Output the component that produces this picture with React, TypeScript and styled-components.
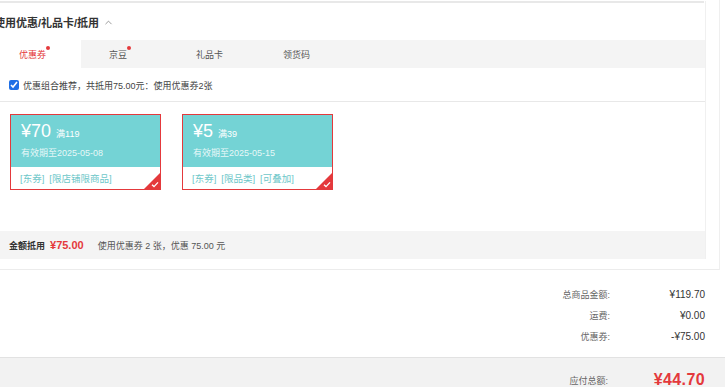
import styled, { createGlobalStyle } from "styled-components";
import { Fragment } from "react";
import { ChevronUp } from "lucide-react";

const GlobalStyle = createGlobalStyle`
  html, body {
    margin: 0;
    padding: 0;
    background: #fff;
    overflow: hidden;
  }
  body {
    font-family: "Liberation Sans", "Noto Sans CJK SC", sans-serif;
    color: #333;
  }
`;

const RED = "#e4393c";
const TEAL = "#74d3d5";

const Page = styled.div`
  width: 725px;
  height: 387px;
  background: #fff;
`;

const OuterBox = styled.section`
  width: 719px;
  padding-top: 1px;
  padding-bottom: 10px;
  border-right: 1px solid #efefef;
  border-bottom: 1px solid #ececec;
`;

const Panel = styled.div`
  width: 705px;
  border-right: 1px solid #f0f0f0;
`;

const Header = styled.div`
  width: 704px;
  height: 36px;
  border-top: 2px solid #e8e8e8;
  display: flex;
  align-items: center;
  gap: 4px;
  padding-top: 1px;
`;

const Title = styled.h3`
  margin: 0 0 0 -6px;
  font-size: 11px;
  font-weight: 700;
  color: #333;
  white-space: nowrap;
`;

const Caret = styled(ChevronUp)`
  color: #777;
`;

const TabBar = styled.div`
  display: flex;
  height: 28px;
  background: #f4f4f4;
`;

const Tab = styled.div<{ $active?: boolean; $first?: boolean }>`
  width: ${(p) => (p.$first ? "81px" : "87px")};
  padding-left: ${(p) => (p.$first ? "19px" : "28px")};
  box-sizing: border-box;
  display: flex;
  align-items: center;
  font-size: 9px;
  color: ${(p) => (p.$active ? RED : "#555")};
  background: ${(p) => (p.$active ? "#fff" : "transparent")};
`;

const TabLabel = styled.span`
  position: relative;
`;

const RedDot = styled.i`
  position: absolute;
  top: -2px;
  right: -4px;
  width: 4px;
  height: 4px;
  border-radius: 50%;
  background: ${RED};
`;

const CheckRow = styled.label`
  display: flex;
  align-items: center;
  gap: 4px;
  height: 34px;
  padding-left: 9px;
  padding-top: 1px;
  box-sizing: border-box;
  border-bottom: 1px solid #e8e8e8;
  font-size: 9px;
  color: #444;
`;

const CheckBox = styled.input`
  width: 10px;
  height: 10px;
  margin: 0;
  accent-color: #1f6fe5;
`;

const CardList = styled.div`
  display: flex;
  gap: 21px;
  padding: 12px 0 41px 10px;
`;

const Card = styled.div`
  position: relative;
  width: 151px;
  height: 76px;
  box-sizing: border-box;
  border: 1px solid ${RED};
  display: flex;
  flex-direction: column;
`;

const CardTop = styled.div`
  height: 52px;
  background: ${TEAL};
  color: #fff;
  padding: 6px 0 0 10px;
  box-sizing: border-box;
`;

const PriceLine = styled.div`
  display: flex;
  align-items: baseline;
  gap: 5px;
  height: 22px;
`;

const Price = styled.span`
  font-size: 18px;
`;

const Cond = styled.span`
  font-size: 9px;
`;

const Expire = styled.div`
  margin-top: 3px;
  font-size: 9px;
  color: rgba(255, 255, 255, 0.85);
`;

const CardBottom = styled.div`
  flex: 1;
  display: flex;
  align-items: center;
  gap: 5px;
  padding-left: 9px;
  font-size: 9.5px;
  color: #6ec7c9;
`;

const Corner = styled.div`
  position: absolute;
  right: 0;
  bottom: 0;
  width: 0;
  height: 0;
  border-style: solid;
  border-width: 0 0 16px 16px;
  border-color: transparent transparent ${RED} transparent;
`;

const CornerCheck = styled.svg`
  position: absolute;
  right: 1px;
  bottom: 1px;
`;

const Summary = styled.div`
  display: flex;
  align-items: center;
  height: 28px;
  background: #f4f4f4;
  padding-left: 9px;
  font-size: 9px;
  color: #555;
`;

const SumLabel = styled.span`
  font-weight: 700;
  color: #333;
`;

const SumValue = styled.span`
  color: ${RED};
  font-weight: 700;
  font-size: 11px;
  margin: 0 14px 0 5px;
`;

const Totals = styled.div`
  display: grid;
  grid-template-columns: auto 95px;
  justify-content: end;
  grid-auto-rows: 21px;
  padding: 14px 20px 10px 0;
  font-size: 9px;
`;

const TLabel = styled.span`
  text-align: right;
  color: #666;
  align-self: center;
`;

const TValue = styled.span`
  text-align: right;
  color: #333;
  font-size: 10px;
  align-self: center;
`;

const PayBar = styled.div`
  border-top: 1px solid #e2e2e2;
  background: #f2f2f2;
  height: 40px;
  display: grid;
  grid-template-columns: auto 95px;
  justify-content: end;
  align-items: center;
  padding: 2px 20px 0 0;
  font-size: 9px;
  color: #666;
`;

const PayLabel = styled.span`
  text-align: right;
  margin-right: 2px;
`;

const PayValue = styled.span`
  text-align: right;
  color: ${RED};
  font-weight: 700;
  font-size: 16px;
  letter-spacing: 0.4px;
`;

const coupons = [
  { amount: "¥70", cond: "满119", expire: "有效期至2025-05-08", tags: ["[东券]", "[限店铺限商品]"] },
  { amount: "¥5", cond: "满39", expire: "有效期至2025-05-15", tags: ["[东券]", "[限品类]", "[可叠加]"] },
];

const tabs = [
  { name: "优惠券", dot: true },
  { name: "京豆", dot: true },
  { name: "礼品卡", dot: false },
  { name: "领货码", dot: false },
];

const totals = [
  ["总商品金额:", "¥119.70"],
  ["运费:", "¥0.00"],
  ["优惠券:", "-¥75.00"],
];

export default function App() {
  return (
    <Page>
      <GlobalStyle />
      <OuterBox>
        <Panel>
          <Header>
            <Title>使用优惠/礼品卡/抵用</Title>
            <Caret size={11} strokeWidth={1.6} />
          </Header>
          <TabBar>
            {tabs.map((t, i) => (
              <Tab key={t.name} $active={i === 0} $first={i === 0}>
                <TabLabel>
                  {t.name}
                  {t.dot && <RedDot />}
                </TabLabel>
              </Tab>
            ))}
          </TabBar>
          <CheckRow>
            <CheckBox type="checkbox" defaultChecked />
            优惠组合推荐，共抵用75.00元：使用优惠券2张
          </CheckRow>
          <CardList>
            {coupons.map((c) => (
              <Card key={c.amount}>
                <CardTop>
                  <PriceLine>
                    <Price>{c.amount}</Price>
                    <Cond>{c.cond}</Cond>
                  </PriceLine>
                  <Expire>{c.expire}</Expire>
                </CardTop>
                <CardBottom>
                  {c.tags.map((t) => (
                    <span key={t}>{t}</span>
                  ))}
                </CardBottom>
                <Corner />
                <CornerCheck width="8" height="7" viewBox="0 0 8 7">
                  <path d="M1 3.8 L3 5.6 L7 1.4" stroke="#fff" strokeWidth="1.3" fill="none" />
                </CornerCheck>
              </Card>
            ))}
          </CardList>
          <Summary>
            <SumLabel>金额抵用</SumLabel>
            <SumValue>¥75.00</SumValue>
            使用优惠券 2 张，优惠 75.00 元
          </Summary>
        </Panel>
      </OuterBox>
      <Totals>
        {totals.map(([l, v]) => (
          <Fragment key={l}>
            <TLabel>{l}</TLabel>
            <TValue>{v}</TValue>
          </Fragment>
        ))}
      </Totals>
      <PayBar>
        <PayLabel>应付总额:</PayLabel>
        <PayValue>¥44.70</PayValue>
      </PayBar>
    </Page>
  );
}
